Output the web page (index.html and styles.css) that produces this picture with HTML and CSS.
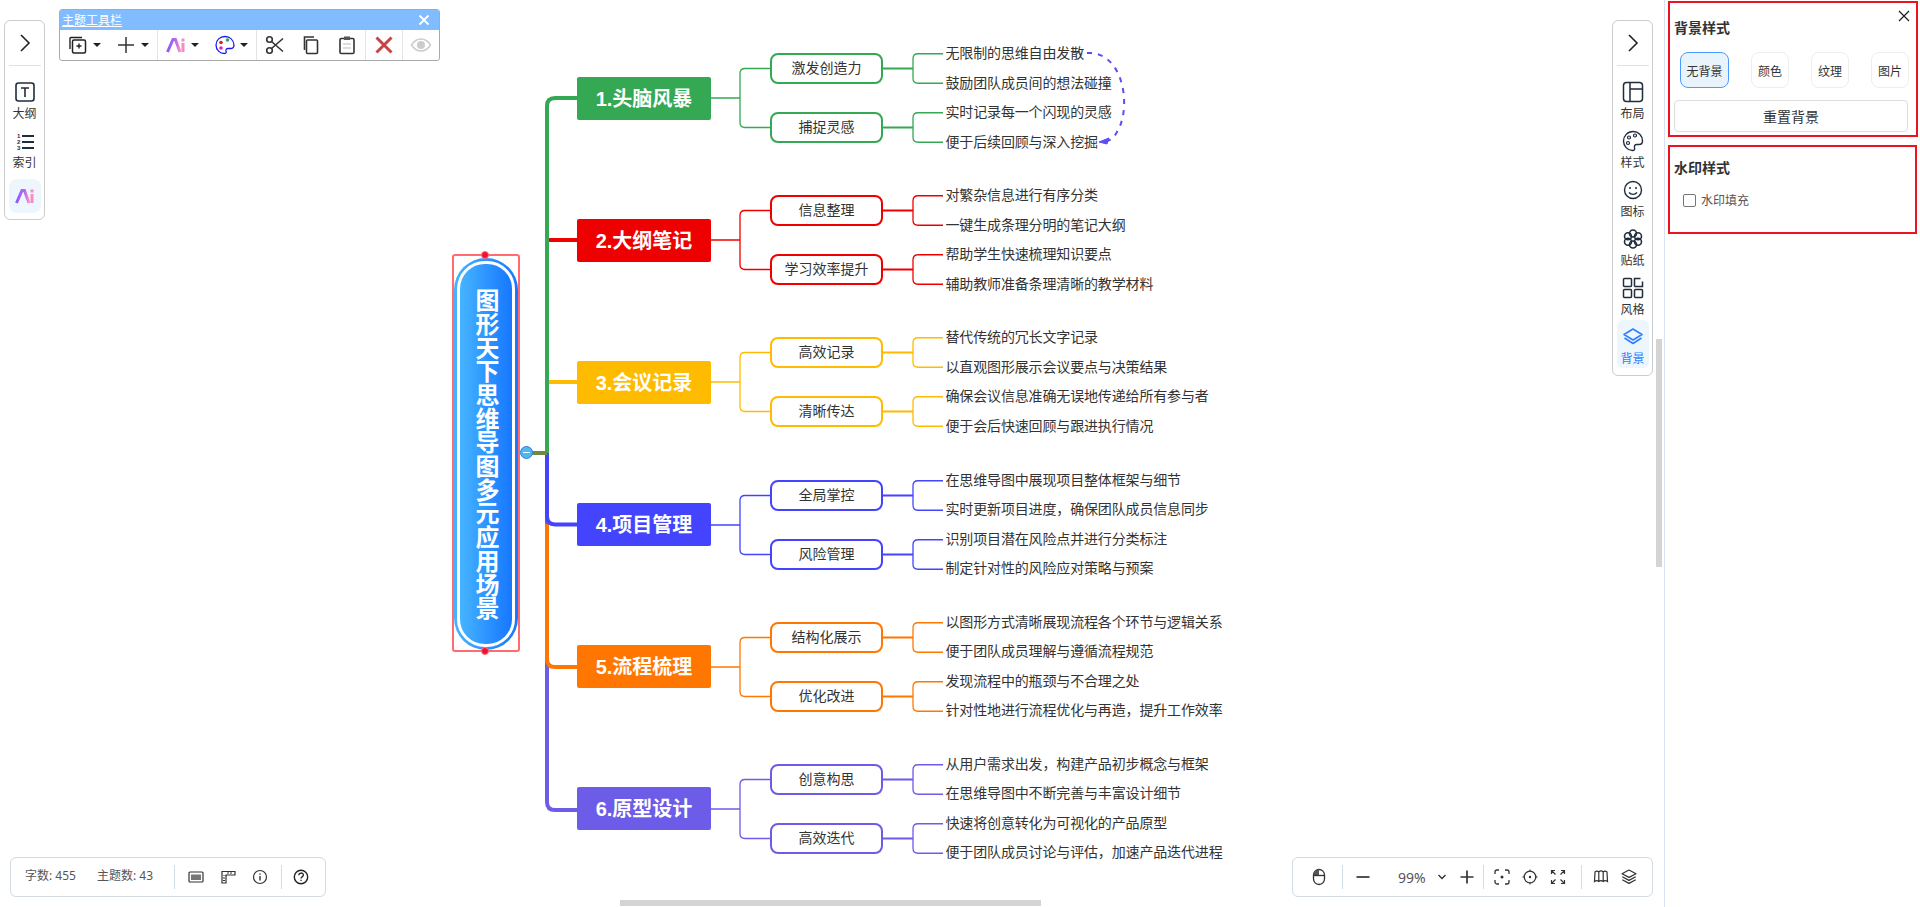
FILE: index.html
```html
<!DOCTYPE html>
<html lang="zh-CN">
<head>
<meta charset="utf-8">
<title>思维导图</title>
<link rel="stylesheet" href="styles.css">
</head>
<body>
<svg class="defs" width="0" height="0" aria-hidden="true">
  <defs>
    <linearGradient id="aiGrad" x1="0" y1="0" x2="1" y2="0">
      <stop offset="0" stop-color="#8f5cf5"/><stop offset=".65" stop-color="#b06cf0"/><stop offset="1" stop-color="#ff8fc0"/>
    </linearGradient>
    <symbol id="links" viewBox="0 0 234 118">
      <path d="M0 59H29M59 29.5H34Q29 29.5 29 34.5V83.5Q29 88.5 34 88.5H59" fill="none" stroke="currentColor" stroke-width="1.3"/>
      <path d="M172 29.5H202M172 88.5H202" fill="none" stroke="currentColor" stroke-width="2"/>
      <path d="M232 14.75H207Q202 14.75 202 19.75V39.25Q202 44.25 207 44.25H232M232 73.75H207Q202 73.75 202 78.75V98.25Q202 103.25 207 103.25H232" fill="none" stroke="currentColor" stroke-width="1.3"/>
    </symbol>
    <symbol id="ai" viewBox="0 0 20 16">
      <path d="M1.5 15L7 2.5H9.5L14 15" fill="none" stroke="url(#aiGrad)" stroke-width="3"/>
      <rect x="15.5" y="6" width="3" height="9" fill="#f58cc2"/><rect x="15.5" y="1.5" width="3" height="3" fill="#f58cc2"/>
    </symbol>
    <symbol id="chev" viewBox="0 0 24 24"><path d="M8 4l8 8-8 8" fill="none" stroke="#222" stroke-width="1.6"/></symbol>
    <symbol id="layers" viewBox="0 0 24 24"><path d="M12 4l9 5.5-9 5.5-9-5.5zM3.5 13l8.5 5.5 8.500-5.500" fill="none" stroke="currentColor" stroke-width="1.500" stroke-linejoin="round"/></symbol>
  </defs>
</svg>

<div class="app">
  <main class="canvas">
    <svg class="trunk" viewBox="0 0 1664 907" aria-hidden="true">
      <path class="t6" d="M547 453V802Q547 810 555 810H577"/>
      <path class="t5" d="M547 524V659Q547 667 555 667H577"/>
      <path class="t4" d="M547 453V516Q547 524.500 555 524.500H577"/>
      <path class="t3" d="M547 382H577"/>
      <path class="t2" d="M547 240H577"/>
      <path class="t1" d="M547 453V106Q547 98 555 98H577"/>
      <path class="t0" d="M530 453H547"/>
    </svg>

    <div class="root-select">
      <div class="root">
        <div class="root-inner"><span class="root-text">图形天下思维导图多元应用场景</span></div>
      </div>
      <span class="handle handle-top"></span>
      <span class="handle handle-bottom"></span>
      <span class="collapse"></span>
    </div>

    <div class="map">
      <section class="branch c1">
        <div class="main">1.头脑风暴</div>
        <svg class="links"><use href="#links"/></svg>
        <div class="subs">
          <div class="sub"><div class="topic">激发创造力</div><ul class="leaves"><li>无限制的思维自由发散</li><li>鼓励团队成员间的想法碰撞</li></ul></div>
          <div class="sub"><div class="topic">捕捉灵感</div><ul class="leaves"><li>实时记录每一个闪现的灵感</li><li>便于后续回顾与深入挖掘</li></ul></div>
        </div>
      </section>
      <section class="branch c2">
        <div class="main">2.大纲笔记</div>
        <svg class="links"><use href="#links"/></svg>
        <div class="subs">
          <div class="sub"><div class="topic">信息整理</div><ul class="leaves"><li>对繁杂信息进行有序分类</li><li>一键生成条理分明的笔记大纲</li></ul></div>
          <div class="sub"><div class="topic">学习效率提升</div><ul class="leaves"><li>帮助学生快速梳理知识要点</li><li>辅助教师准备条理清晰的教学材料</li></ul></div>
        </div>
      </section>
      <section class="branch c3">
        <div class="main">3.会议记录</div>
        <svg class="links"><use href="#links"/></svg>
        <div class="subs">
          <div class="sub"><div class="topic">高效记录</div><ul class="leaves"><li>替代传统的冗长文字记录</li><li>以直观图形展示会议要点与决策结果</li></ul></div>
          <div class="sub"><div class="topic">清晰传达</div><ul class="leaves"><li>确保会议信息准确无误地传递给所有参与者</li><li>便于会后快速回顾与跟进执行情况</li></ul></div>
        </div>
      </section>
      <section class="branch c4">
        <div class="main">4.项目管理</div>
        <svg class="links"><use href="#links"/></svg>
        <div class="subs">
          <div class="sub"><div class="topic">全局掌控</div><ul class="leaves"><li>在思维导图中展现项目整体框架与细节</li><li>实时更新项目进度，确保团队成员信息同步</li></ul></div>
          <div class="sub"><div class="topic">风险管理</div><ul class="leaves"><li>识别项目潜在风险点并进行分类标注</li><li>制定针对性的风险应对策略与预案</li></ul></div>
        </div>
      </section>
      <section class="branch c5">
        <div class="main">5.流程梳理</div>
        <svg class="links"><use href="#links"/></svg>
        <div class="subs">
          <div class="sub"><div class="topic">结构化展示</div><ul class="leaves"><li>以图形方式清晰展现流程各个环节与逻辑关系</li><li>便于团队成员理解与遵循流程规范</li></ul></div>
          <div class="sub"><div class="topic">优化改进</div><ul class="leaves"><li>发现流程中的瓶颈与不合理之处</li><li>针对性地进行流程优化与再造，提升工作效率</li></ul></div>
        </div>
      </section>
      <section class="branch c6">
        <div class="main">6.原型设计</div>
        <svg class="links"><use href="#links"/></svg>
        <div class="subs">
          <div class="sub"><div class="topic">创意构思</div><ul class="leaves"><li>从用户需求出发，构建产品初步概念与框架</li><li>在思维导图中不断完善与丰富设计细节</li></ul></div>
          <div class="sub"><div class="topic">高效迭代</div><ul class="leaves"><li>快速将创意转化为可视化的产品原型</li><li>便于团队成员讨论与评估，加速产品迭代进程</li></ul></div>
        </div>
      </section>
    </div>

    <svg class="relation" viewBox="0 0 1664 907" aria-hidden="true">
      <path class="rel-line" d="M1087 53C1124 51 1132 108 1117 132Q1112 141 1105 141.500"/>
      <path class="rel-head" d="M1099 142L1109 138L1107 144Z"/>
    </svg>

    <nav class="rail rail-left">
      <div class="rail-head"><svg class="ico-24"><use href="#chev"/></svg></div>
      <div class="rail-item">
        <svg class="ico-24" viewBox="0 0 24 24"><rect x="3" y="3" width="18" height="18" rx="2.500" fill="none" stroke="#1f2d3d" stroke-width="1.600"/><path d="M8 8h8M12 8v9" fill="none" stroke="#1f2d3d" stroke-width="1.600"/></svg>
        <span>大纲</span>
      </div>
      <div class="rail-item">
        <svg class="ico-24" viewBox="0 0 24 24"><text x="4" y="9" class="tiny">1</text><text x="4" y="15" class="tiny">2</text><text x="4" y="21" class="tiny">3</text><path d="M9 7h12M9 13h12M9 19h12" fill="none" stroke="#1f2d3d" stroke-width="2"/></svg>
        <span>索引</span>
      </div>
      <div class="rail-ai"><svg class="ico-ai-big"><use href="#ai"/></svg></div>
    </nav>

    <div class="theme-bar">
      <div class="theme-title"><span>主题工具栏</span>
        <svg class="theme-close" viewBox="0 0 12 12"><path d="M1.500 1.500l9 9M10.500 1.500l-9 9" stroke="#fff" stroke-width="1.800" fill="none"/></svg>
      </div>
      <div class="theme-row">
        <div class="theme-group g-a">
          <div class="tbtn"><svg class="ico-20" viewBox="0 0 20 20"><rect x="4.500" y="5" width="13" height="13" rx="1.500" fill="none" stroke="#222" stroke-width="1.500"/><path d="M2 14V3.500a1 1 0 0 1 1-1h11M11 8.500v5M8.500 11h5" stroke="#222" stroke-width="1.400" fill="none"/></svg><i class="caret"></i></div>
          <div class="tbtn"><svg class="ico-20" viewBox="0 0 20 20"><path d="M10 2v16M2 10h16" stroke="#333" stroke-width="1.500" fill="none"/></svg><i class="caret"></i></div>
        </div>
        <div class="theme-group g-a">
          <div class="tbtn"><svg class="ico-ai"><use href="#ai"/></svg><i class="caret"></i></div>
          <div class="tbtn"><svg class="ico-20" viewBox="0 0 20 20"><path d="M10 1.500C5 1.500 1 5 1 10s4 8.500 8.500 8.500c2 0 1.800-1.500 1.500-2.500-.4-1.500.6-2.500 2-2.500h2.500c2 0 3.500-1.500 3.500-3.500C18.500 5 15 1.500 10 1.500z" fill="#fff" stroke="#1a1aee" stroke-width="1.300"/><circle cx="6" cy="7.500" r="1.800" fill="#e02020"/><circle cx="12.500" cy="5" r="1.800" fill="#2fa84f"/><circle cx="6" cy="13" r="1.800" fill="#e020c0"/></svg><i class="caret"></i></div>
        </div>
        <div class="theme-group g-b">
          <div class="tbtn"><svg class="ico-20" viewBox="0 0 20 20"><circle cx="4.500" cy="4.500" r="2.800" fill="none" stroke="#333" stroke-width="1.600"/><circle cx="4.500" cy="15.500" r="2.800" fill="none" stroke="#333" stroke-width="1.600"/><path d="M6.500 6.500L18 16.500M6.500 13.500L18 3.500" stroke="#333" stroke-width="1.600" fill="none"/></svg></div>
          <div class="tbtn"><svg class="ico-20" viewBox="0 0 20 20"><rect x="5.500" y="5" width="11" height="13.500" rx="1" fill="none" stroke="#333" stroke-width="1.600"/><path d="M13 2H3.500v13" fill="none" stroke="#333" stroke-width="1.600"/></svg></div>
          <div class="tbtn"><svg class="ico-20" viewBox="0 0 20 20"><rect x="3" y="3.500" width="14" height="15" rx="1.300" fill="none" stroke="#333" stroke-width="1.600"/><rect x="7" y="1.500" width="6" height="3.500" fill="#555"/><path d="M6 9h8M6 13h8" stroke="#bbb" stroke-width="1" fill="none"/></svg></div>
        </div>
        <div class="theme-group g-c">
          <div class="tbtn"><svg class="ico-20" viewBox="0 0 20 20"><path d="M2.500 2.500l15 15M17.500 2.500l-15 15" stroke="#c94444" stroke-width="3" fill="none"/></svg></div>
        </div>
        <div class="theme-group g-d">
          <div class="tbtn"><svg class="ico-22" viewBox="0 0 22 22"><path d="M1.500 11C4 7 7 5 11 5s7 2 9.500 6c-2.500 4-5.500 6-9.500 6S4 15 1.500 11z" fill="none" stroke="#ccc" stroke-width="1.500"/><circle cx="11" cy="11" r="4" fill="#ccc"/></svg></div>
        </div>
      </div>
    </div>

    <nav class="rail rail-right">
      <div class="rail-head"><svg class="ico-24"><use href="#chev"/></svg></div>
      <div class="rail-item">
        <svg class="ico-24" viewBox="0 0 24 24"><rect x="2.500" y="2.500" width="19" height="19" rx="3" fill="none" stroke="#1f2d3d" stroke-width="1.500"/><path d="M9 2.500v19M9 9h12.500" fill="none" stroke="#1f2d3d" stroke-width="1.500"/></svg>
        <span>布局</span>
      </div>
      <div class="rail-item">
        <svg class="ico-24" viewBox="0 0 24 24"><path d="M12 2.500C6.500 2.500 2.500 7 2.500 12s4 9.500 9 9.500c2 0 2.500-1.500 2-3-.4-1.500.5-3 2-3h2.500c2 0 3.500-1.500 3.500-3.500C21.500 6.500 17.500 2.500 12 2.500z" fill="none" stroke="#1f2d3d" stroke-width="1.400"/><circle cx="8" cy="8.500" r="1.500" fill="none" stroke="#1f2d3d" stroke-width="1.200"/><circle cx="14" cy="6.500" r="1.500" fill="none" stroke="#1f2d3d" stroke-width="1.200"/><circle cx="7" cy="14" r="1.500" fill="none" stroke="#1f2d3d" stroke-width="1.200"/></svg>
        <span>样式</span>
      </div>
      <div class="rail-item">
        <svg class="ico-24" viewBox="0 0 24 24"><circle cx="12" cy="12" r="8.500" fill="none" stroke="#1f2d3d" stroke-width="1.400"/><circle cx="9" cy="10" r="1" fill="#1f2d3d"/><circle cx="15" cy="10" r="1" fill="#1f2d3d"/><path d="M8 14.500c2 2.500 6 2.500 8 0" fill="none" stroke="#1f2d3d" stroke-width="1.400"/></svg>
        <span>图标</span>
      </div>
      <div class="rail-item">
        <svg class="ico-24" viewBox="0 0 24 24"><g fill="none" stroke="#1f2d3d" stroke-width="1.600"><circle cx="12" cy="6.500" r="3.500"/><circle cx="12" cy="17.500" r="3.500"/><circle cx="7" cy="9.300" r="3.500"/><circle cx="17" cy="9.300" r="3.500"/><circle cx="7" cy="14.700" r="3.500"/><circle cx="17" cy="14.700" r="3.500"/></g></svg>
        <span>贴纸</span>
      </div>
      <div class="rail-item">
        <svg class="ico-24" viewBox="0 0 24 24"><g fill="none" stroke="#1f2d3d" stroke-width="1.500"><rect x="2.500" y="2.500" width="8" height="8" rx="1"/><path d="M13.500 10.500v-8h6"/><path d="M13.500 10.500h8v-5"/><rect x="2.500" y="13.500" width="8" height="8" rx="1"/><rect x="13.500" y="13.500" width="8" height="8" rx="1"/></g></svg>
        <span>风格</span>
      </div>
      <div class="rail-item is-active">
        <svg class="ico-24"><use href="#layers"/></svg>
        <span>背景</span>
      </div>
    </nav>

    <div class="scroll-v"></div>
    <div class="scroll-h"></div>

    <footer class="status-bar">
      <div class="stats"><span>字数: 455</span><span>主题数: 43</span></div>
      <i class="vsep"></i>
      <div class="btn-set s-status">
        <div class="sbtn"><svg class="ico-16" viewBox="0 0 16 16"><rect x="1" y="3" width="14" height="10" rx="1" fill="none" stroke="#333" stroke-width="1.200"/><rect x="3" y="5.500" width="10" height="5.500" fill="#777"/></svg></div>
        <div class="sbtn"><svg class="ico-16" viewBox="0 0 16 16"><path d="M2 2.500h13v3.500H6v8H2z" fill="none" stroke="#333" stroke-width="1.200"/><path d="M4 6v1M6 6v1M8 3v2M11 3v2M3 9h2M3 11.500h2" stroke="#333" stroke-width="1" fill="none"/></svg></div>
        <div class="sbtn"><svg class="ico-16" viewBox="0 0 16 16"><circle cx="8" cy="8" r="6.500" fill="none" stroke="#333" stroke-width="1.200"/><path d="M8 7v4.500M8 4.500v1.300" stroke="#333" stroke-width="1.400" fill="none"/></svg></div>
      </div>
      <i class="vsep"></i>
      <div class="sbtn s-help"><svg class="ico-16" viewBox="0 0 16 16"><circle cx="8" cy="8" r="6.700" fill="none" stroke="#222" stroke-width="1.400"/><path d="M5.800 6.300c0-3 4.600-3 4.600-.2 0 1.800-2.400 1.700-2.400 3.400M8 10.700v1.300" fill="none" stroke="#222" stroke-width="1.300"/></svg></div>
    </footer>

    <footer class="zoom-bar">
      <div class="sbtn z-mouse"><svg class="ico-18" viewBox="0 0 18 18"><rect x="3.500" y="1.500" width="11" height="15" rx="5.500" fill="none" stroke="#333" stroke-width="1.300"/><path d="M3.500 7.500V7a5.500 5.500 0 0 1 5.500-5.500V7.500z" fill="#555"/><path d="M3.500 7.500h11" stroke="#333" stroke-width="1.300"/></svg></div>
      <i class="vsep"></i>
      <div class="sbtn z-minus"><svg class="ico-16" viewBox="0 0 16 16"><path d="M1.500 8h13" stroke="#333" stroke-width="1.700"/></svg></div>
      <div class="z-value">99%</div>
      <svg class="z-chev" viewBox="0 0 10 6"><path d="M1.500 1L5 4.500 8.500 1" fill="none" stroke="#333" stroke-width="1.400"/></svg>
      <div class="sbtn z-plus"><svg class="ico-16" viewBox="0 0 16 16"><path d="M1.500 8h13M8 1.500v13" stroke="#333" stroke-width="1.700"/></svg></div>
      <i class="vsep"></i>
      <div class="btn-set s-zoom">
        <div class="zbtn"><svg class="ico-16" viewBox="0 0 16 16"><path d="M1 5V3a2 2 0 0 1 2-2h2M11 1h2a2 2 0 0 1 2 2v2M15 11v2a2 2 0 0 1-2 2h-2M5 15H3a2 2 0 0 1-2-2v-2" fill="none" stroke="#333" stroke-width="1.300"/><circle cx="8" cy="8" r="1.500" fill="#333"/></svg></div>
        <div class="zbtn"><svg class="ico-16" viewBox="0 0 16 16"><circle cx="8" cy="8" r="5.800" fill="none" stroke="#333" stroke-width="1.300"/><circle cx="8" cy="8" r="1.200" fill="#333"/><path d="M8 .5v2M8 13.500v2M.5 8h2M13.500 8h2" stroke="#333" stroke-width="1"/></svg></div>
        <div class="zbtn"><svg class="ico-16" viewBox="0 0 16 16"><path d="M1.500 5V1.500H5M11 1.500h3.500V5M14.500 11v3.500H11M5 14.500H1.500V11M2 2l3.500 3.500M14 2l-3.500 3.500M14 14l-3.500-3.500M2 14l3.500-3.500" fill="none" stroke="#333" stroke-width="1.200"/></svg></div>
      </div>
      <i class="vsep"></i>
      <div class="btn-set s-last">
        <div class="zbtn"><svg class="ico-16" viewBox="0 0 16 16"><path d="M2 3c1.500-1.200 2.500-1.200 3.800 0 1.300-1.200 3.100-1.200 4.400 0 1.300-1.200 2.300-1.200 3.800 0l.5 9.500c-1.700-1.200-3-1.200-4.300 0-1.400-1.200-3.100-1.200-4.400 0-1.300-1.200-2.600-1.200-4.300 0zM5.800 3v9.500M10.200 3v9.500" fill="none" stroke="#333" stroke-width="1.200"/></svg></div>
        <div class="zbtn"><svg class="ico-18" viewBox="0 0 18 18"><path d="M9 2l7 3.700-7 3.700-7-3.700zM2.300 8.800L9 12.400l6.700-3.600M2.300 11.800L9 15.400l6.700-3.600" fill="none" stroke="#333" stroke-width="1.200" stroke-linejoin="round"/></svg></div>
      </div>
    </footer>
  </main>

  <aside class="panel">
    <svg class="panel-close" viewBox="0 0 12 12"><path d="M1 1l10 10M11 1L1 11" stroke="#222" stroke-width="1.300" fill="none"/></svg>
    <section class="card card-bg">
      <h3>背景样式</h3>
      <div class="tabs">
        <button class="tab tab-wide is-on">无背景</button>
        <button class="tab">颜色</button>
        <button class="tab">纹理</button>
        <button class="tab">图片</button>
      </div>
      <button class="reset">重置背景</button>
    </section>
    <section class="card card-mark">
      <h3>水印样式</h3>
      <label class="check"><i class="box"></i><span>水印填充</span></label>
    </section>
  </aside>
</div>
</body>
</html>
```

FILE: styles.css
```css
* { box-sizing: border-box; }
html, body { margin: 0; height: 100%; overflow: hidden; background: #fff; }
body { font-family: "Noto Sans", "Noto Sans CJK SC", sans-serif; color: #333; font-size: 12px; }
.defs { position: absolute; }
svg { display: block; }

.app { display: flex; height: 907px; }
.canvas { position: relative; flex: 1; min-width: 0; overflow: hidden; }

/* trunk lines */
.trunk, .relation { position: absolute; left: 0; top: 0; width: 1664px; height: 907px; pointer-events: none; }
.trunk path { fill: none; stroke-width: 4; }
.t0 { stroke: #6f8a45; }
.t1 { stroke: #34a853; }
.t2 { stroke: #ee0000; }
.t3 { stroke: #ffbb00; }
.t4 { stroke: #4444ff; }
.t5 { stroke: #ff7700; }
.t6 { stroke: #6c5ce7; }

/* central topic */
.root-select { position: absolute; left: 452px; top: 254px; width: 68px; height: 398px; border: 2px solid #ff6b6f; border-radius: 3px; padding: 1px 0; }
.root { height: 392px; margin: 1px 0 0; border-radius: 32px; padding: 3px; background: linear-gradient(90deg, #45b4ff, #1677ff); }
.root-inner { height: 100%; border: 3px solid #fff; border-radius: 28px; background: linear-gradient(90deg, #45b4ff, #1677ff); display: flex; align-items: center; justify-content: center; }
.root-text { margin-right: 2px; color: #fff; font: bold 24px/24px "Liberation Sans", "Noto Sans CJK SC", sans-serif; letter-spacing: -0.3px; writing-mode: vertical-rl; text-orientation: upright; white-space: nowrap; }
.handle { position: absolute; left: 27px; width: 8px; height: 8px; border-radius: 50%; background: #f01030; border: 1px solid #ff7080; }
.handle-top { top: -5px; }
.handle-bottom { bottom: -5px; }
.collapse { position: absolute; left: 66px; top: 190px; width: 13px; height: 13px; border-radius: 50%; background: #4db8f0; border: 1px solid #2f80d8; }
.collapse::after { content: ""; position: absolute; left: 2px; right: 2px; top: 5px; height: 1px; background: #fff; }

/* tree */
.map { position: absolute; left: 577px; top: 39px; display: flex; flex-direction: column; gap: 24.2px; }
.branch { position: relative; display: flex; align-items: center; height: 118px; }
.main { width: 134px; height: 43px; margin-right: 59px; border-radius: 2px; color: #fff; background: var(--c); font: bold 20px/44px "Liberation Sans", "Noto Sans CJK SC", sans-serif; text-align: center; flex: none; }
.links { position: absolute; left: 134px; top: 0; width: 234px; height: 118px; color: var(--c); overflow: visible; }
.subs { position: relative; display: flex; flex-direction: column; }
.sub { display: flex; align-items: center; height: 59px; }
.topic { width: 113px; height: 31px; margin-right: 62px; border: 2px solid var(--c); border-radius: 8px; background: #fff; color: #333; font-size: 14px; line-height: 26px; text-align: center; flex: none; }
.leaves { list-style: none; margin: 0; padding: 0 0 0 .5px; }
.leaves li { height: 29.5px; line-height: 28px; font-size: 14px; letter-spacing: -0.15px; color: #333; white-space: nowrap; }
.c1 { --c: #34a853; }
.c2 { --c: #ee0000; }
.c3 { --c: #ffbb00; }
.c4 { --c: #4444ff; }
.c5 { --c: #ff7700; }
.c6 { --c: #6c5ce7; }

/* relation */
.rel-line { fill: none; stroke: #5b4cf5; stroke-width: 2; stroke-dasharray: 5 6; }
.rel-head { fill: #5b4cf5; stroke: #5b4cf5; stroke-width: 1; }

/* rails */
.rail { position: absolute; top: 20px; width: 41px; border: 1px solid #ccc; border-radius: 6px; background: #fff; display: flex; flex-direction: column; align-items: center; }
.rail-left { left: 4px; height: 200px; }
.rail-right { left: 1612px; height: 356px; }
.rail-head { width: 32px; height: 45px; border-bottom: 1px solid #d6e4ee; margin-bottom: 9px; display: flex; align-items: center; justify-content: center; flex: none; }
.rail-item { width: 32px; height: 48px; margin-bottom: 1px; padding-top: 5px; border-radius: 6px; display: flex; flex-direction: column; align-items: center; flex: none; color: #333; }
.rail-item span { font-size: 12px; line-height: 18px; margin-top: 1px; }
.rail-item.is-active { background: #eef6fd; color: #2b7fff; }
.rail-ai { width: 32px; height: 34px; margin-top: 6px; border-radius: 8px; background: #eef6fd; display: flex; align-items: center; justify-content: center; flex: none; }
.ico-24 { width: 24px; height: 24px; flex: none; }
.ico-22 { width: 22px; height: 22px; }
.ico-20 { width: 20px; height: 20px; flex: none; }
.ico-18 { width: 18px; height: 18px; }
.ico-16 { width: 16px; height: 16px; }
.ico-ai { width: 20px; height: 16px; flex: none; }
.ico-ai-big { width: 20px; height: 16px; }
.tiny { font: bold 6px "Liberation Sans", sans-serif; fill: #1f2d3d; }

/* theme toolbar */
.theme-bar { position: absolute; left: 59px; top: 9px; width: 381px; height: 52px; border: 1px solid #aaa; border-radius: 3px; background: #fff; overflow: hidden; }
.theme-title { height: 20px; padding: 0 9px 0 2px; background: #80bcff; color: #fff; display: flex; align-items: center; justify-content: space-between; font-size: 12px; text-decoration: underline; }
.theme-close { width: 12px; height: 12px; }
.theme-row { display: flex; height: 30px; }
.theme-group { display: flex; height: 30px; border-right: 1px solid #e4e4e4; }
.g-a { width: 99px; }
.g-a:first-child { width: 98px; }
.g-b { width: 109px; }
.g-c { width: 37px; }
.g-d { flex: 1; border-right: 0; }
.tbtn { flex: 1; display: flex; align-items: center; justify-content: center; gap: 5px; }
.caret { width: 0; height: 0; border: 4px solid transparent; border-top: 4px solid #222; border-bottom: 0; }

/* bottom bars */
.status-bar, .zoom-bar { position: absolute; bottom: 10px; height: 40px; border: 1px solid #d3dae0; border-radius: 6px; background: #fff; display: flex; align-items: center; }
.status-bar { left: 10px; width: 316px; }
.zoom-bar { left: 1292px; width: 361px; }
.stats { width: 163px; padding-left: 14px; display: flex; gap: 21px; color: #555; font-size: 12px; line-height: 16px; margin-top: -2px; white-space: nowrap; }
.vsep { width: 1px; height: 24px; background: #cfdde6; flex: none; }
.btn-set { display: flex; }
.s-status { padding: 0 5px; }
.sbtn { width: 32px; height: 32px; display: flex; align-items: center; justify-content: center; flex: none; }
.s-help { margin-left: 3px; }
.z-mouse { margin: 0 7px 0 10px; }
.z-minus { margin-left: 4px; }
.z-value { width: 58px; padding-left: 19px; font-size: 14px; color: #555; }
.z-chev { width: 10px; height: 6px; flex: none; }
.z-plus { margin-left: 4px; }
.s-zoom { padding-left: 4px; margin-right: 9px; }
.zbtn { width: 28px; height: 32px; display: flex; align-items: center; justify-content: center; }
.s-last { padding-left: 5px; }

/* scrollbars */
.scroll-v { position: absolute; left: 1656px; top: 339px; width: 6px; height: 228px; background: #d4d4d4; }
.scroll-h { position: absolute; left: 620px; top: 900px; width: 421px; height: 6px; background: #d4d4d4; }

/* side panel */
.panel { position: relative; width: 256px; flex: none; border-left: 1px solid #d8e4f2; background: #fff; padding: 1px 2px 0 3px; }
.panel-close { position: absolute; right: 10px; top: 10px; width: 12px; height: 12px; z-index: 1; }
.card { border: 2px solid #ee1122; padding: 0 4px; }
.card h3 { margin: 0; font-size: 14px; line-height: 20px; font-weight: bold; color: #333; }
.card-bg { height: 136px; padding-top: 15px; }
.card-mark { height: 89px; margin-top: 8px; width: 249px; padding-top: 11px; }
.tabs { display: flex; margin: 14px 0 0 6px; gap: 22px; }
.tab { width: 38px; height: 36px; padding: 0; border: 1px solid #eee; border-radius: 8px; background: #fff; font: 12px "Noto Sans CJK SC", sans-serif; color: #333; }
.tab-wide { width: 49px; }
.tab.is-on { border-color: #4a9bff; background: #e8f3fc; }
.reset { display: block; width: 234px; height: 32px; margin-top: 12px; padding: 0; border: 1px solid #ddd; border-radius: 4px; background: #fff; font: 14px "Noto Sans CJK SC", sans-serif; color: #333; }
.check { display: flex; align-items: center; gap: 5px; margin: 13px 0 0 9px; color: #555; font-size: 12px; }
.box { width: 13px; height: 13px; border: 1px solid #767676; border-radius: 2px; }
```
